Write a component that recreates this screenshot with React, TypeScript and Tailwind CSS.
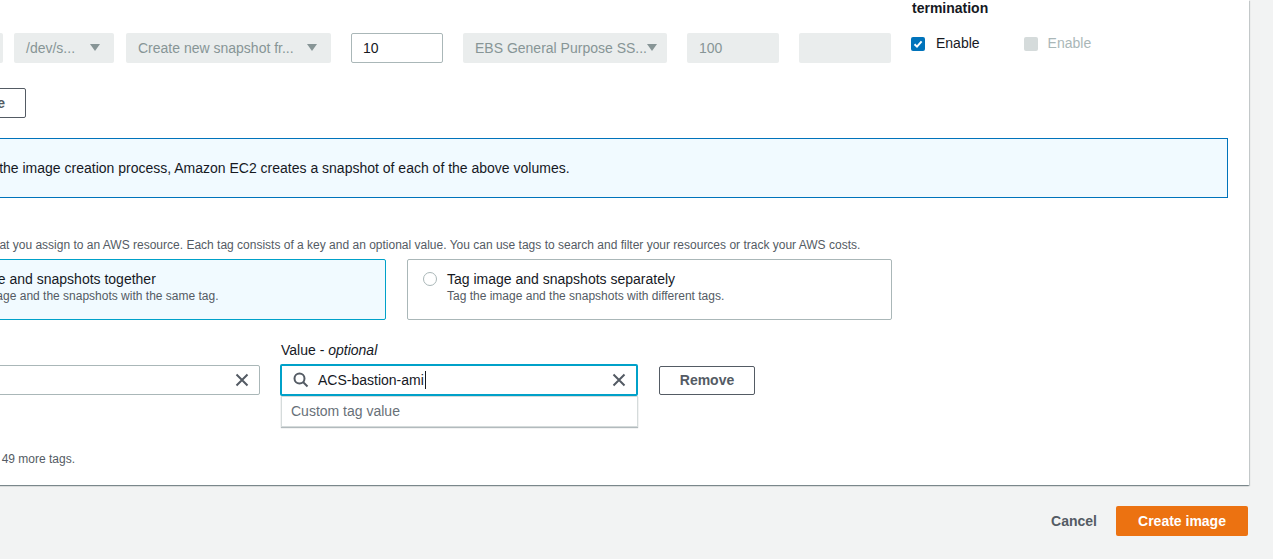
import React from 'react';

const font = { fontFamily: '"Liberation Sans", Arial, sans-serif' };

const Caret = () => (
  <svg width="10" height="8" viewBox="0 0 10 8" className="shrink-0">
    <path d="M0 0 H10 L5 7 Z" fill="#879596" />
  </svg>
);

const CloseIcon = ({ className = '' }: { className?: string }) => (
  <svg width="16" height="16" viewBox="0 0 16 16" className={className}>
    <path d="M2.5 2.5 L13.5 13.5 M13.5 2.5 L2.5 13.5" stroke="#545b64" strokeWidth="2" fill="none" />
  </svg>
);

const SearchIcon = () => (
  <svg width="16" height="16" viewBox="0 0 16 16" className="shrink-0">
    <circle cx="6.5" cy="6.5" r="5" stroke="#545b64" strokeWidth="2" fill="none" />
    <path d="M10 10 L14.5 14.5" stroke="#545b64" strokeWidth="2" fill="none" />
  </svg>
);

const GreySelect = ({ label, width, ml }: { label: string; width: string; ml: string }) => (
  <div className={`${width} ${ml} h-[30px] rounded-[2px] bg-[#eaeded] flex items-center pl-[12px] pr-[14px] gap-[8px] text-[14px] text-[#879596]`}>
    <span className="flex-1 whitespace-nowrap">{label}</span>
    <Caret />
  </div>
);

export default function App() {
  return (
    <div className="min-h-screen w-full overflow-hidden bg-[#f2f3f3] text-[#16191f]" style={font}>
      {/* card */}
      <div className="-ml-[120px] w-[1369px] bg-white pl-[20px] pr-[21px] pb-[18px] shadow-[0_1px_1px_0_rgba(0,28,36,0.3),1px_1px_1px_0_rgba(0,28,36,0.15),-1px_1px_1px_0_rgba(0,28,36,0.15)]">
        {/* column headers */}
        <div className="flex h-[16px] items-center">
          <div className="ml-[1012px] text-[14px] font-bold leading-[16px]">termination</div>
        </div>

        {/* volume row */}
        <div className="mt-[17px] flex items-start">
          <div className="w-[103px] h-[30px] rounded-[2px] bg-[#eaeded]" />
          <GreySelect label="/dev/s..." width="w-[100px]" ml="ml-[11px]" />
          <GreySelect label="Create new snapshot fr..." width="w-[205px]" ml="ml-[12px]" />
          <div className="ml-[20px] w-[92px] h-[30px] border border-[#aab7b8] rounded-[2px] flex items-center px-[11px] text-[14px]">10</div>
          <div className="ml-[20px] w-[204px] h-[30px] rounded-[2px] bg-[#eaeded] flex items-center pl-[12px] text-[14px] text-[#879596]">
            <span className="whitespace-nowrap">EBS General Purpose SS...</span>
            <Caret />
          </div>
          <div className="ml-[20px] w-[92px] h-[30px] rounded-[2px] bg-[#eaeded] flex items-center px-[12px] text-[14px] text-[#879596]">100</div>
          <div className="ml-[20px] w-[92px] h-[30px] rounded-[2px] bg-[#eaeded]" />
          <div className="ml-[20px] flex items-center">
            <div className="w-[14px] h-[14px] rounded-[2px] bg-[#0073bb] flex items-center justify-center">
              <svg width="10" height="10" viewBox="0 0 10 10">
                <path d="M1.5 5.2 L4 7.6 L8.6 2.4" stroke="white" strokeWidth="2" fill="none" />
              </svg>
            </div>
            <span className="ml-[11px] text-[14px]">Enable</span>
          </div>
          <div className="ml-[44px] flex items-center">
            <div className="w-[14px] h-[14px] rounded-[2px] bg-[#d5dbdb]" />
            <span className="ml-[10px] text-[14px] text-[#aab7b8]">Enable</span>
          </div>
        </div>

        {/* add volume */}
        <div className="mt-[25px]">
          <button className="w-[126px] h-[30px] border border-[#545b64] rounded-[2px] bg-white flex items-center justify-end pr-[20px] text-[14px] font-bold text-[#545b64]">
            Add volume
          </button>
        </div>

        {/* info */}
        <div className="mt-[20px] h-[60px] border border-[#0073bb] bg-[#f1faff] flex items-center pl-[53px] text-[14px]">
          During the image creation process, Amazon EC2 creates a snapshot of each of the above volumes.
        </div>

        {/* tags */}
        <div className="mt-[39px] pl-[8px] text-[12px] leading-[16px] text-[#545b64]">
          A tag is a label that you assign to an AWS resource. Each tag consists of a key and an optional value. You can use tags to search and filter your resources or track your AWS costs.
        </div>

        <div className="mt-[6px] flex gap-[21px]">
          <div className="w-[486px] h-[61px] border border-[#00a1c9] bg-[#f1faff] rounded-[2px] flex pt-[10px] pl-[16px]">
            <div className="mt-[2px] w-[14px] h-[14px] rounded-full border-[4px] border-[#0073bb] bg-white" />
            <div className="ml-[10px]">
              <div className="text-[14px] leading-[18px]">Tag image and snapshots together</div>
              <div className="text-[12px] leading-[16px] text-[#545b64]">Tag the image and the snapshots with the same tag.</div>
            </div>
          </div>
          <div className="w-[485px] h-[61px] border border-[#aab7b8] bg-white rounded-[2px] flex pt-[10px] pl-[15px]">
            <div className="mt-[2px] w-[14px] h-[14px] rounded-full border border-[#aab7b8] bg-white" />
            <div className="ml-[10px]">
              <div className="text-[14px] leading-[18px]">Tag image and snapshots separately</div>
              <div className="text-[12px] leading-[16px] text-[#545b64]">Tag the image and the snapshots with different tags.</div>
            </div>
          </div>
        </div>

        {/* key / value */}
        <div className="mt-[22px] flex items-start">
          <div className="w-[360px]">
            <div className="h-[16px] text-[14px] leading-[16px]">Key</div>
            <div className="mt-[7px] h-[30px] border border-[#aab7b8] rounded-[2px] bg-white flex items-center justify-end pr-[9px]">
              <CloseIcon />
            </div>
          </div>
          <div className="ml-[20px] w-[358px]">
            <div className="h-[16px] text-[14px] leading-[16px] pl-[1px]">
              Value - <i>optional</i>
            </div>
            <div className="relative mt-[6px]">
              <div className="h-[32px] border-2 border-[#00a1c9] rounded-[2px] bg-white flex items-center pl-[11px] pr-[9px]">
                <SearchIcon />
                <span className="ml-[9px] text-[14px]">ACS-bastion-ami</span>
                <span className="ml-[1px] w-[1px] h-[18px] bg-[#16191f]" />
                <span className="flex-1" />
                <CloseIcon />
              </div>
              <div className="absolute left-[1px] right-0 top-[32px] h-[31px] bg-white border border-[#d5dbdb] shadow-[0_1px_1px_0_rgba(0,28,36,0.3)] flex items-center pl-[9px] text-[14px] text-[#687078]">
                Custom tag value
              </div>
            </div>
          </div>
          <button className="ml-[21px] mt-[24px] w-[96px] h-[29px] border border-[#545b64] rounded-[2px] bg-white text-[14px] font-bold text-[#545b64]">
            Remove
          </button>
        </div>

        <div className="mt-[55px] pl-[2px] text-[12px] leading-[16px] text-[#545b64]">
          You can add up to 49 more tags.
        </div>
      </div>

      {/* footer */}
      <div className="mt-[21px] flex items-center justify-end pr-[25px]">
        <button className="text-[14px] font-bold text-[#545b64] mr-[19px]">Cancel</button>
        <button className="w-[132px] h-[30px] rounded-[2px] bg-[#ec7211] text-white text-[14px] font-bold">Create image</button>
      </div>
    </div>
  );
}
